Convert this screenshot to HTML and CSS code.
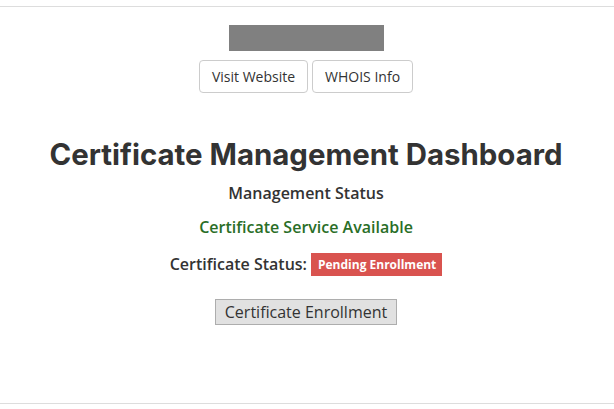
FILE: index.html
```html
<!DOCTYPE html>
<html lang="en">
<head>
  <meta charset="UTF-8" />
  <title>Certificate Management Dashboard</title>
  <link rel="stylesheet" href="styles.css">
</head>
<body>

  <div class="page">
    <div class="logo-box"></div>

    <div class="links">
      <button class="btn-link">Visit Website</button>
      <button class="btn-link">WHOIS Info</button>
    </div>

    <h1>Certificate Management Dashboard</h1>

    <p class="status-title">Management Status</p>
    <p class="status-ok">Certificate Service Available</p>

    <p class="cert-status">
      Certificate Status: <span class="label-danger">Pending Enrollment</span>
    </p>

    <button class="btn-enroll">Certificate Enrollment</button>
  </div>

</body>
</html>
```

FILE: styles.css
```css
* {
  box-sizing: border-box;
  margin: 0;
  padding: 0;
}

body {
  font-family: 'Open Sans', sans-serif;
  color: #333;
  background: #fff;
  padding-top: 6px;
}

.page {
  height: 398px;
  padding-right: 2px;
  border-top: 1px solid #ddd;
  border-bottom: 1px solid #ddd;
  display: flex;
  flex-direction: column;
  align-items: center;
  text-align: center;
}

.logo-box {
  width: 155px;
  height: 26px;
  background: #808080;
  margin-top: 18px;
}

.links {
  margin-top: 9px;
  display: flex;
  gap: 4px;
}

.btn-link {
  font-family: 'Open Sans', sans-serif;
  font-size: 14px;
  color: #333;
  background: #fff;
  border: 1px solid #ccc;
  border-radius: 4px;
  height: 33px;
  padding: 0 12px;
}

h1 {
  font-family: 'Inter', sans-serif;
  font-weight: 700;
  font-size: 29.4px;
  line-height: 36px;
  margin-top: 44px;
  color: #333;
}

.status-title {
  font-weight: 600;
  font-size: 16px;
  line-height: 22px;
  margin-top: 9px;
}

.status-ok {
  font-weight: 600;
  font-size: 16px;
  line-height: 22px;
  margin-top: 12px;
  color: #2a6e27;
}

.cert-status {
  font-weight: 600;
  font-size: 16px;
  line-height: 24px;
  margin-top: 14px;
  display: flex;
  align-items: center;
  gap: 4px;
}

.label-danger {
  display: inline-block;
  background: #d9534f;
  color: #fff;
  font-size: 12px;
  font-weight: 700;
  line-height: 15px;
  padding: 4px 6px 4px 7px;
  border-radius: 0;
}

.btn-enroll {
  margin-top: 23px;
  font-family: 'Open Sans', sans-serif;
  font-size: 16px;
  color: #333;
  background: #e1e1e1;
  border: 1px solid #adadad;
  height: 26px;
  padding: 0 9px;
}
```
